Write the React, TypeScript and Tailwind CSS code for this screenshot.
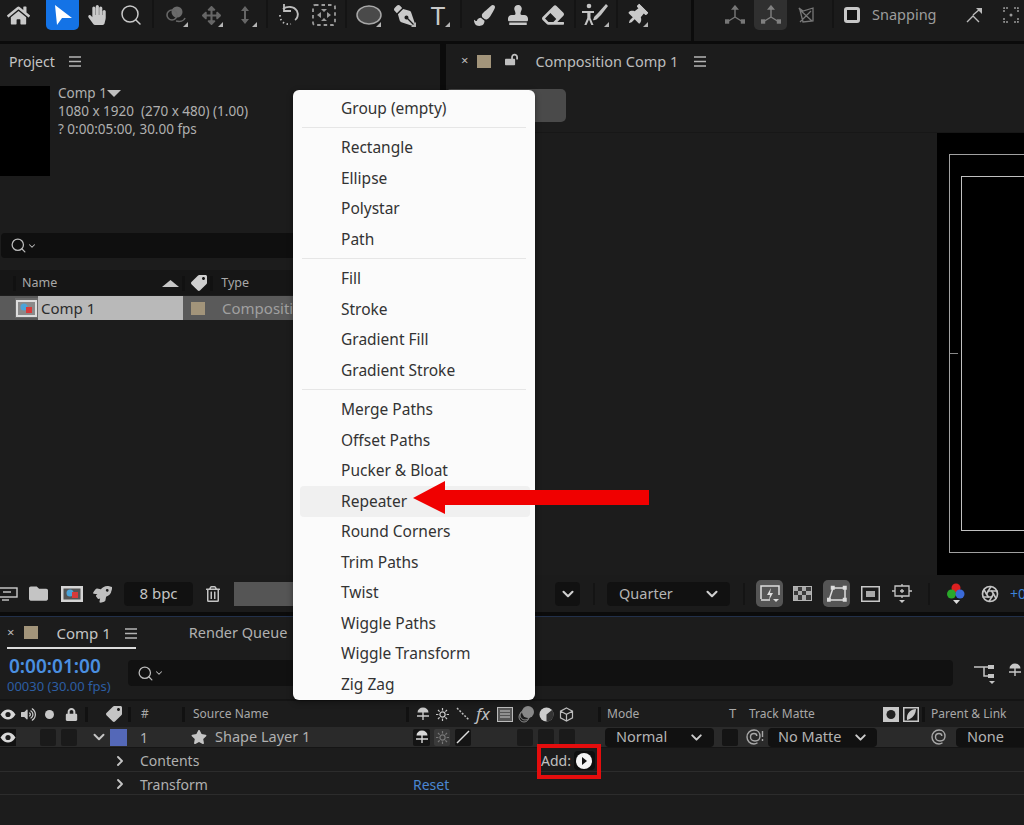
import React from "react";
import { FaHandPaper, FaArrowsAlt, FaPenNib, FaPaintBrush, FaStamp, FaEraser, FaThumbtack, FaStar, FaTag, FaLock, FaLockOpen, FaVolumeUp, FaFolder, FaRegTrashAlt, FaRocket, FaHome } from "react-icons/fa";
import { ChevronDown, ChevronRight, Search, Aperture } from "lucide-react";

const Fly = () => (
  <svg width="5" height="5" viewBox="0 0 5 5" className="absolute right-[1px] bottom-[3px]"><path d="M5 0V5H0Z" fill="#b5b5b5" /></svg>
);

function Tool({ cls, fly, children }: { cls: string; fly?: boolean; children: React.ReactNode }) {
  return (
    <div className={"relative h-[30px] flex items-center justify-center shrink-0 " + cls}>
      {children}
      {fly && <Fly />}
    </div>
  );
}

const Sep = ({ cls }: { cls: string }) => <div className={"w-[2px] h-[28px] bg-[#141414] shrink-0 " + cls} />;

const Burger = ({ cls = "" }: { cls?: string }) => (
  <svg width="12" height="11" viewBox="0 0 12 11" className={cls}><path d="M0 1h12M0 5.500h12M0 10h12" stroke="#b4b4b4" strokeWidth="1.300" /></svg>
);

const Swatch = ({ cls = "" }: { cls?: string }) => <div className={"w-[14px] h-[13px] bg-[#a2947a] shrink-0 " + cls} />;

const Axis = ({ color = "#777" }: { color?: string }) => (
  <svg width="20" height="20" viewBox="0 0 20 20" fill="none" stroke={color} strokeWidth="1.400"><path d="M10 2v10M10 12l-8 5M10 12l8 5" /><path d="M10 1l-2.500 3h5z" fill={color} /><rect x="0.500" y="15" width="3" height="3" fill={color} /><rect x="16.500" y="15" width="3" height="3" fill={color} /></svg>
);

const Eye = () => (
  <svg width="16" height="11" viewBox="0 0 16 11"><path d="M0.500 5.500C3 1.500 5.500 0.500 8 0.500s5 1 7.500 5c-2.500 4-5 5-7.500 5s-5-1-7.500-5z" fill="#d8d8d8" /><circle cx="8" cy="5.500" r="2.600" fill="#1c1c1c" /></svg>
);

const Anchor = ({ c = "#c8c8c8" }: { c?: string }) => (
  <svg width="16" height="14" viewBox="0 0 16 14"><path d="M2.500 5.500a5.500 5 0 0 1 11 0z" fill={c} /><path d="M8 5v8M2 9h12" stroke={c} strokeWidth="1.400" fill="none" /></svg>
);

const Sun = ({ c = "#c8c8c8" }: { c?: string }) => (
  <svg width="13" height="13" viewBox="0 0 13 13" stroke={c} strokeWidth="1.200" fill="none"><circle cx="6.500" cy="6.500" r="2.600" /><path d="M6.500 0v2.400M6.500 10.600V13M0 6.500h2.400M10.600 6.500H13M2 2l1.600 1.600M9.400 9.400L11 11M11 2L9.400 3.600M3.600 9.400L2 11" /></svg>
);

const Spiral = ({ c = "#a8a8a8", dots }: { c?: string; dots?: boolean }) => (
  <svg width="18" height="16" viewBox="0 0 18 16" fill="none" stroke={c} strokeWidth="1.400">
    <path d="M11.500 13.800C10.500 14.500 9.300 15 8 15 4 15 1 12 1 8s3-7 7-7 6 3 6 6-2 5-5 5-4.500-2-4.500-4 1.500-3.500 3.500-3.500 2.800 1.300 2.800 2.500" />
    {dots && <path d="M16.500 2v6M16.500 10v2" />}
  </svg>
);

const menu: (string | null)[] = [
  "Group (empty)", null, "Rectangle", "Ellipse", "Polystar", "Path", null, "Fill", "Stroke", "Gradient Fill", "Gradient Stroke", null,
  "Merge Paths", "Offset Paths", "Pucker & Bloat", "Repeater", "Round Corners", "Trim Paths", "Twist", "Wiggle Paths", "Wiggle Transform", "Zig Zag",
];

const Box = ({ cls = "" }: { cls?: string }) => <div className={"w-[16px] h-[17px] rounded-[2px] bg-[#1a1a1a] shrink-0 " + cls} />;
const HSep = ({ cls = "" }: { cls?: string }) => <div className={"w-[3px] h-[15px] bg-[#111] shrink-0 " + cls} />;

export default function App() {
  return (
    <div className="relative w-[1024px] h-[825px] overflow-hidden bg-[#0b0b0b] flex flex-col text-[#b9b9b9] font-['Open_Sans','Noto_Sans',sans-serif] text-[14px]">
      {/* toolbar */}
      <div className="h-[41px] shrink-0 bg-[#1b1b1b] flex items-start pt-0">
        <Tool cls="ml-[6px] w-[24px]"><FaHome size={23} color="#c9c9c9" /></Tool>
        <div className="ml-[16px] w-[33px] h-[30px] bg-[#1473e6] rounded-b-[5px] shrink-0 flex items-center justify-center">
          <svg width="20" height="24" viewBox="0 0 20 24"><path d="M2 2L19 15H9L4 22Z" fill="#fff" /></svg>
        </div>
        <Tool cls="ml-[6px] w-[24px]"><FaHandPaper size={20} color="#c9c9c9" /></Tool>
        <Tool cls="ml-[9px] w-[26px]"><Search size={24} color="#c9c9c9" strokeWidth={1.500} /></Tool>
        <Sep cls="ml-[8px]" />
        <Tool cls="ml-[9px] w-[26px]" fly>
          <svg width="24" height="22" viewBox="0 0 24 22" fill="none"><circle cx="13" cy="8" r="5.500" fill="#6a6a6a" /><circle cx="8" cy="11" r="5" stroke="#666" strokeWidth="1.600" /><path d="M12 17c4 1 8 0 9-3" stroke="#666" strokeWidth="1.600" /></svg>
        </Tool>
        <Tool cls="ml-[9px] w-[26px]" fly><FaArrowsAlt size={19} color="#666" /></Tool>
        <Tool cls="ml-[8px] w-[26px]" fly>
          <svg width="14" height="20" viewBox="0 0 14 20" fill="#666"><path d="M7 1L3 6H6V14H3L7 19L11 14H8V6H11Z" /></svg>
        </Tool>
        <Sep cls="ml-[8px]" />
        <Tool cls="ml-[8px] w-[26px]">
          <svg width="24" height="24" viewBox="0 0 24 24" fill="none" stroke="#bdbdbd" strokeWidth="1.800"><path d="M6 6C10 3 17 3 20 8c2 4 0 8-2 9" /><path d="M7 1v7h7" strokeWidth="1.800" /><path d="M3 12c0 6 4 10 11 9" strokeDasharray="1.500 2.500" /></svg>
        </Tool>
        <Tool cls="ml-[9px] w-[26px]">
          <svg width="24" height="22" viewBox="0 0 24 22" fill="none" stroke="#9a9a9a" strokeWidth="1.800"><rect x="1" y="1" width="22" height="20" rx="2" strokeDasharray="3.500 3" /><path d="M5 11l4-3v6zM19 11l-4-3v6z" fill="#9a9a9a" stroke="none" /><path d="M9 5h6l-3 3zM9 17h6l-3-3z" fill="#9a9a9a" stroke="none" /></svg>
        </Tool>
        <Sep cls="ml-[8px]" />
        <Tool cls="ml-[9px] w-[26px]" fly>
          <svg width="26" height="20" viewBox="0 0 26 20"><ellipse cx="13" cy="10" rx="12" ry="9" fill="#4a4a4a" stroke="#a8a8a8" strokeWidth="1.500" /></svg>
        </Tool>
        <Tool cls="ml-[9px] w-[26px]" fly><FaPenNib size={21} color="#c9c9c9" className="rotate-[-90deg]" /></Tool>
        <Tool cls="ml-[8px] w-[26px]" fly><span className="font-['Liberation_Serif',serif] text-[#c9c9c9] text-[26px] leading-[30px]">T</span></Tool>
        <Sep cls="ml-[9px]" />
        <Tool cls="ml-[9px] w-[26px]"><FaPaintBrush size={21} color="#c9c9c9" /></Tool>
        <Tool cls="ml-[8px] w-[26px]"><FaStamp size={20} color="#c9c9c9" /></Tool>
        <Tool cls="ml-[9px] w-[26px]"><FaEraser size={22} color="#c9c9c9" /></Tool>
        <Sep cls="ml-[8px]" />
        <Tool cls="ml-[4px] w-[30px]" fly>
          <svg width="28" height="24" viewBox="0 0 28 24" fill="#c4c4c4"><circle cx="8" cy="3" r="2.300" /><path d="M1 8h12v2H9.500v5l3 7h-2.200L8 16.500 5.500 22H3.300l3-7v-5H1zM25 1l2 2-7 9-4 4c-1 1-3 1.500-4 1 1-1 .5-3 2-4l3-3z" /></svg>
        </Tool>
        <Sep cls="ml-[6px]" />
        <Tool cls="ml-[5px] w-[26px]" fly><FaThumbtack size={21} color="#c9c9c9" className="rotate-[45deg]" /></Tool>
        <div className="ml-[42px] w-[3px] h-[41px] bg-[#0c0c0c] shrink-0" />
        <Tool cls="ml-[30px] w-[22px]"><Axis /></Tool>
        <div className="ml-[8px] w-[33px] h-[30px] bg-[#303030] rounded-b-[5px] shrink-0 flex items-center justify-center"><Axis color="#808080" /></div>
        <Tool cls="ml-[8px] w-[22px]">
          <svg width="18" height="18" viewBox="0 0 18 18" fill="none" stroke="#777" strokeWidth="1.300"><path d="M2 2l4 3 10-3v13l-10 1-3-12zM3 16L14 5M3 4l12 11" /></svg>
        </Tool>
        <Sep cls="ml-[15px]" />
        <div className="ml-[10px] h-[30px] flex items-center shrink-0">
          <div className="w-[16px] h-[16px] border-[3px] border-[#c8c8c8] rounded-[3px] bg-[#141414]" />
          <span className="ml-[12px] text-[#9d9d9d] text-[14.500px]">Snapping</span>
        </div>
        <Tool cls="ml-[27px] w-[20px]">
          <svg width="18" height="16" viewBox="0 0 18 16" fill="none" stroke="#bbb" strokeWidth="1.400"><path d="M2 15l6-6 6 6M8 8l7-6" /><path d="M11 1h6v6z" fill="#bbb" stroke="none" /></svg>
        </Tool>
        <Tool cls="ml-[17px] w-[20px]">
          <svg width="16" height="16" viewBox="0 0 16 16" fill="none" stroke="#999" strokeWidth="1.500"><path d="M1 5V1h4M11 1h4v4M15 11v4h-4M5 15H1v-4" strokeDasharray="2 1" /><circle cx="8" cy="8" r="1.500" fill="#999" stroke="none" /></svg>
        </Tool>
      </div>

      {/* panels */}
      <div className="mt-[3px] h-[568px] shrink-0 flex gap-[6px]">
        {/* project */}
        <div className="w-[440px] shrink-0 bg-[#1c1c1c] flex flex-col">
          <div className="h-[34px] shrink-0 flex items-center pl-[9px] text-[#c4c4c4] text-[14px]">
            Project<Burger cls="ml-[14px]" />
          </div>
          <div className="mt-[8px] h-[90px] flex shrink-0">
            <div className="w-[50px] h-[90px] bg-black shrink-0" />
            <div className="ml-[8px] text-[13.500px] leading-[18px] -mt-[2px] text-[#b0b0b0]">
              <div className="flex items-center">Comp 1<svg width="14" height="7" viewBox="0 0 14 7"><path d="M0 0h14L7 7z" fill="#c0c0c0" /></svg></div>
              <div>1080 x 1920&nbsp; (270 x 480) (1.00)</div>
              <div>? 0:00:05:00, 30.00 fps</div>
            </div>
          </div>
          <div className="mt-[57px] ml-[1px] h-[25px] bg-[#0f0f0f] rounded-[4px] flex items-center pl-[9px] shrink-0">
            <Search size={17} color="#bbb" strokeWidth={1.800} />
            <ChevronDown size={10} color="#bbb" strokeWidth={2.500} />
          </div>
          <div className="mt-[12px] h-[25px] pt-[1px] bg-[#161616] flex items-center shrink-0 text-[12.500px] text-[#a8a8a8]">
            <HSep cls="ml-[13px]" />
            <span className="ml-[6px]">Name</span>
            <svg width="17" height="7" viewBox="0 0 17 7" className="ml-[105px]"><path d="M0 7h17L8.500 0z" fill="#c8c8c8" /></svg>
            <HSep cls="ml-[3px]" />
            <FaTag size={16} color="#cfcfcf" className="ml-[6px] rotate-90" />
            <HSep cls="ml-[3px]" />
            <span className="ml-[8px]">Type</span>
          </div>
          <div className="mt-[1px] h-[24px] bg-[#5a5a5a] flex items-center shrink-0">
            <div className="ml-[15px] w-[23px] h-[20px] bg-[#6a6a6a] flex items-center justify-center shrink-0">
              <svg width="21" height="17" viewBox="0 0 21 17"><rect width="21" height="17" fill="#ddd" /><rect x="2" y="2" width="17" height="13" fill="#8a8a8a" /><circle cx="8" cy="7" r="3.500" fill="#4aa3d8" /><rect x="10" y="7" width="6" height="6" fill="#d83a3a" /></svg>
            </div>
            <div className="w-[145px] h-[24px] bg-[#b9b9b9] text-[#2c2c2c] text-[15px] flex items-center pl-[3px] shrink-0">Comp 1</div>
            <Swatch cls="ml-[8px]" />
            <span className="ml-[17px] text-[#a0a0a0] text-[15px]">Composition</span>
          </div>
          <div className="flex-1" />
          <div className="h-[37px] bg-[#1b1b1b] flex items-center shrink-0">
            <svg width="18" height="14" viewBox="0 0 18 14" fill="none" stroke="#ccc" strokeWidth="1.400"><rect x="-2" y="1" width="19" height="9" /><path d="M3 5h8" /><path d="M2 13h7" /></svg>
            <FaFolder size={19} color="#c4c4c4" className="ml-[11px]" />
            <svg width="22" height="16" viewBox="0 0 22 16" className="ml-[13px]"><rect width="22" height="16" fill="#d5d5d5" /><rect x="2.500" y="2.500" width="17" height="11" fill="#555" /><circle cx="9" cy="7" r="3.500" fill="#4aa3d8" /><rect x="11" y="6" width="6" height="6" fill="#d83a3a" /></svg>
            <FaRocket size={18} color="#bfbfbf" className="ml-[10px] rotate-[10deg]" />
            <div className="ml-[13px] w-[69px] h-[24px] bg-[#111] rounded-[4px] flex items-center justify-center text-[#c4c4c4] text-[15px] shrink-0">8 bpc</div>
            <FaRegTrashAlt size={16} color="#c4c4c4" className="ml-[12px]" />
            <div className="ml-[13px] w-[70px] h-[24px] bg-[#555] shrink-0" />
          </div>
        </div>

        {/* composition */}
        <div className="flex-1 bg-[#1c1c1c] flex flex-col min-w-0">
          <div className="h-[34px] shrink-0 flex items-center text-[#bdbdbd]">
            <span className="ml-[15px] text-[13px]">×</span>
            <Swatch cls="ml-[9px]" />
            <FaLockOpen size={13} color="#c0c0c0" className="ml-[14px] -mt-[4px]" />
            <span className="ml-[17px] mt-[1px] text-[14.500px]">Composition Comp 1</span>
            <Burger cls="ml-[16px]" />
          </div>
          <div className="h-[55px] shrink-0 border-b border-[#171717] pt-[11px]">
            <div className="w-[120px] h-[33px] bg-[#4a4a4a] rounded-[5px]" />
          </div>
          <div className="flex-1 flex justify-end">
            <div className="w-[87px] bg-black pt-[21px] pl-[12px]">
              <div className="h-[399px] border-l border-y border-[#a0a0a0] pl-[11px] py-[21px] relative">
                <div className="h-full border-l border-y border-[#c0c0c0]" />
                <div className="absolute left-0 top-[198px] w-[8px] h-px bg-[#888]" />
              </div>
            </div>
          </div>
          <div className="h-[37px] shrink-0 bg-[#1b1b1b] flex items-center">
            <div className="ml-[109px] w-[25px] h-[24px] bg-[#111] rounded-[4px] flex items-center justify-center shrink-0"><ChevronDown size={18} color="#d0d0d0" strokeWidth={2.800} /></div>
            <div className="ml-[13px] w-[2px] h-[22px] bg-[#141414] shrink-0" />
            <div className="ml-[12px] w-[123px] h-[24px] bg-[#111] rounded-[4px] flex items-center justify-between pl-[12px] pr-[9px] text-[14.500px] text-[#b4b4b4] shrink-0">
              Quarter<ChevronDown size={18} color="#d0d0d0" strokeWidth={2.800} />
            </div>
            <div className="ml-[13px] w-[2px] h-[22px] bg-[#141414] shrink-0" />
            <div className="ml-[11px] w-[27px] h-[27px] bg-[#555] rounded-[5px] flex items-center justify-center shrink-0">
              <svg width="20" height="18" viewBox="0 0 20 18" fill="none" stroke="#ddd" strokeWidth="1.500"><path d="M1 14V1h18v9M1 15h9" /><path d="M11 3l-4 7h3l-1 5 4-7h-3z" fill="#ddd" stroke="none" /><path d="M13 14h6l-3 3z" fill="#ddd" stroke="none" /></svg>
            </div>
            <svg width="19" height="15" viewBox="0 0 19 15" className="ml-[10px] shrink-0"><rect width="19" height="15" fill="#b5b5b5" /><rect x="1" y="1" width="17" height="13" fill="#3a3a3a" /><path d="M1 1h4v4H1zM9 1h4v4H9zM5 5h4v4H5zM13 5h5v4h-5zM1 9h4v5H1zM9 9h4v5H9z" fill="#aaa" /></svg>
            <div className="ml-[11px] w-[27px] h-[27px] bg-[#555] rounded-[5px] flex items-center justify-center shrink-0">
              <svg width="20" height="18" viewBox="0 0 20 18" fill="none" stroke="#ddd" strokeWidth="1.500"><path d="M6 3h12M18 3v12M18 15H2M2 15l4-12" /><rect x="4.500" y="1.500" width="2.500" height="2.500" fill="#ddd" /><rect x="16.500" y="1.500" width="2.500" height="2.500" fill="#ddd" /><rect x="16.500" y="13.500" width="2.500" height="2.500" fill="#ddd" /><rect x="0.500" y="13.500" width="2.500" height="2.500" fill="#ddd" /></svg>
            </div>
            <svg width="19" height="16" viewBox="0 0 19 16" className="ml-[11px] shrink-0"><rect x="0.750" y="0.750" width="17.500" height="14.500" fill="none" stroke="#c8c8c8" strokeWidth="1.500" /><rect x="5" y="5" width="9" height="6" fill="#aaa" /></svg>
            <svg width="20" height="20" viewBox="0 0 20 20" className="ml-[12px] shrink-0" fill="none" stroke="#c8c8c8" strokeWidth="1.300"><path d="M3 2h14v10H3zM0 7h3M17 7h3M10 0v2M10 12v2M8 7h4M10 5v4" /><path d="M7 16h6l-3 3z" fill="#c8c8c8" stroke="none" /></svg>
            <div className="ml-[16px] w-[2px] h-[22px] bg-[#141414] shrink-0" />
            <svg width="18" height="22" viewBox="0 0 18 22" className="ml-[17px] shrink-0"><circle cx="9" cy="5" r="4.500" fill="#dc2020" /><circle cx="4.500" cy="11" r="4.500" fill="#2aa82a" /><circle cx="13" cy="11" r="4.500" fill="#3a6ad8" /><path d="M6 17h7l-3.500 4z" fill="#ddd" /></svg>
            <Aperture size={18} color="#c4c4c4" strokeWidth={2.200} className="ml-[16px] shrink-0" />
            <span className="ml-[11px] text-[#3d82d8] text-[14px] shrink-0">+0</span>
          </div>
        </div>
      </div>

      {/* timeline */}
      <div className="mt-[4px] h-px bg-[#22304a] shrink-0" />
      <div className="flex-1 bg-[#1c1c1c] flex flex-col min-h-0">
        <div className="h-[32px] shrink-0 flex items-center relative text-[14.500px]">
          <span className="ml-[7px] text-[13px] text-[#bbb]">×</span>
          <Swatch cls="ml-[10px] -mt-[2px]" />
          <span className="ml-[18px] text-[15px] text-[#c4c4c4]">Comp 1</span>
          <Burger cls="ml-[14px]" />
          <span className="ml-[52px] text-[#b0b0b0]">Render Queue</span>
          <div className="absolute left-[7px] top-[30px] w-[129px] h-[2px] bg-[#dcdcdc]" />
        </div>
        <div className="h-[50px] shrink-0 flex relative">
          <div className="ml-[7px] w-[112px] shrink-0 leading-none pt-[8px]">
            <div className="text-[#4a8fe0] text-[19px] font-semibold pl-[2px]">0:00:01:00</div>
            <div className="text-[#2c5ea3] text-[13px] mt-[4px] whitespace-nowrap">00030 (30.00 fps)</div>
          </div>
          <div className="ml-[9px] mt-[11px] w-[825px] h-[26px] bg-[#111] rounded-[4px] flex items-center pl-[9px] shrink-0">
            <Search size={17} color="#bbb" strokeWidth={1.800} />
            <ChevronDown size={10} color="#bbb" strokeWidth={2.500} />
          </div>
          <svg width="22" height="22" viewBox="0 0 22 22" className="ml-[21px] mt-[14px] shrink-0" fill="none" stroke="#c4c4c4" strokeWidth="1.500"><path d="M0 4h8M8 4h6M10 4v9h4" /><path d="M14 2h6v4h-6zM14 11h6v4h-6z" fill="#c4c4c4" stroke="none" /><path d="M15 18h6l-3 3z" fill="#c4c4c4" stroke="none" /></svg>
          <div className="ml-[11px] mt-[14px] h-[20px] shrink-0"><Anchor /></div>
        </div>

        {/* headers */}
        <div className="h-[28px] shrink-0 border-t-2 border-[#141414] flex items-center text-[12px] text-[#a8a8a8]">
          <div className="w-[16px] shrink-0"><Eye /></div>
          <FaVolumeUp size={15} color="#c8c8c8" className="ml-[5px] shrink-0" />
          <div className="ml-[9px] w-[9px] h-[9px] rounded-full bg-[#c8c8c8] shrink-0" />
          <FaLock size={13} color="#c8c8c8" className="ml-[11px] shrink-0" />
          <HSep cls="ml-[7px]" />
          <FaTag size={16} color="#c4c4c4" className="ml-[18px] rotate-90 shrink-0" />
          <HSep cls="ml-[6px]" />
          <span className="ml-[10px] w-[41px]">#</span>
          <HSep />
          <span className="ml-[8px] w-[213px] whitespace-nowrap">Source Name</span>
          <HSep />
          <div className="ml-[6px] w-[21px] shrink-0"><Anchor /></div>
          <div className="w-[20px] shrink-0"><Sun /></div>
          <svg width="14" height="14" viewBox="0 0 14 14" className="shrink-0"><path d="M1 1l12 12" stroke="#c0c0c0" strokeWidth="1.500" strokeDasharray="2 1.500" /></svg>
          <span className="ml-[6px] w-[21px] italic text-[17px] font-['Liberation_Serif',serif] text-[#c0c0c0]">fx</span>
          <svg width="16" height="15" viewBox="0 0 16 15" className="shrink-0"><rect x="0.500" y="0.500" width="15" height="14" fill="#555" stroke="#bbb" /><path d="M3 4h10M3 7h10M3 10h10" stroke="#ccc" /></svg>
          <svg width="18" height="18" viewBox="0 0 18 18" className="ml-[4px] shrink-0"><circle cx="7" cy="12" r="5" fill="none" stroke="#888" /><circle cx="8" cy="10" r="5" fill="none" stroke="#888" /><circle cx="11" cy="7" r="6" fill="#888" /></svg>
          <svg width="15" height="15" viewBox="0 0 15 15" className="ml-[4px] shrink-0"><circle cx="7.500" cy="7.500" r="7" fill="#ccc" /><path d="M7.500 7.500L13 3a7 7 0 0 1-5.500 11.500z" fill="#333" /></svg>
          <svg width="15" height="15" viewBox="0 0 15 15" className="ml-[5px] shrink-0" fill="none" stroke="#bbb" strokeWidth="1.200"><path d="M7.500 1l6 3.200v6.600l-6 3.200-6-3.200V4.200zM1.500 4.200l6 3.200 6-3.200M7.500 7.400V14" /></svg>
          <HSep cls="ml-[24px]" />
          <span className="ml-[6px] w-[122px]">Mode</span>
          <span className="w-[20px] text-[13px]">T</span>
          <span className="w-[134px] whitespace-nowrap">Track Matte</span>
          <svg width="16" height="15" viewBox="0 0 16 15" className="shrink-0"><rect width="16" height="15" fill="#c8c8c8" /><circle cx="8" cy="7.500" r="4.500" fill="#222" /></svg>
          <svg width="16" height="15" viewBox="0 0 16 15" className="ml-[4px] shrink-0"><rect x="0.750" y="0.750" width="14.500" height="13.500" fill="none" stroke="#c8c8c8" strokeWidth="1.500" /><path d="M13 2C8 2 3 6 4 13c5-1 9-6 9-11z" fill="#c8c8c8" /></svg>
          <HSep cls="ml-[3px]" />
          <span className="ml-[6px] whitespace-nowrap">Parent &amp; Link</span>
        </div>

        {/* layer row */}
        <div className="h-[21px] shrink-0 bg-[#2a2a2a] border-b border-[#151515] flex items-center">
          <div className="w-[16px] h-[17px] bg-[#111] flex items-center justify-center shrink-0"><Eye /></div>
          <Box cls="ml-[24px]" />
          <Box cls="ml-[5px]" />
          <ChevronDown size={18} color="#c4c4c4" strokeWidth={2.600} className="ml-[13px] shrink-0" />
          <div className="ml-[2px] w-[17px] h-[17px] bg-[#5468b8] shrink-0" />
          <span className="ml-[13px] w-[51px] shrink-0 text-[14px] text-[#b4b4b4]">1</span>
          <FaStar size={16} color="#c4c4c4" className="shrink-0" />
          <span className="ml-[8px] w-[198px] shrink-0 text-[14.500px] text-[#b0b0b0] whitespace-nowrap">Shape Layer 1</span>
          <div className="w-[17px] h-[17px] bg-[#141414] rounded-[2px] flex items-center justify-center shrink-0"><Anchor c="#d8d8d8" /></div>
          <div className="ml-[4px] w-[16px] h-[17px] bg-[#3a3a3a] rounded-[2px] flex items-center justify-center shrink-0"><Sun c="#777" /></div>
          <div className="ml-[5px] w-[16px] h-[17px] bg-[#141414] rounded-[2px] flex items-center justify-center shrink-0"><svg width="14" height="14" viewBox="0 0 14 14"><path d="M1 13L13 1" stroke="#ddd" strokeWidth="1.500" /></svg></div>
          <Box cls="ml-[46px]" />
          <Box cls="ml-[5px]" />
          <Box cls="ml-[5px]" />
          <div className="ml-[30px] w-[109px] h-[19px] bg-[#111] rounded-[4px] flex items-center justify-between pl-[11px] pr-[9px] text-[14.500px] text-[#b4b4b4] shrink-0">Normal<ChevronDown size={17} color="#ccc" strokeWidth={2.800} /></div>
          <Box cls="ml-[8px] bg-[#141414]" />
          <div className="ml-[8px] w-[22px] shrink-0"><Spiral dots /></div>
          <div className="w-[109px] h-[19px] bg-[#111] rounded-[4px] flex items-center justify-between pl-[10px] pr-[8px] text-[14.500px] text-[#b4b4b4] shrink-0">No Matte<ChevronDown size={17} color="#ccc" strokeWidth={2.800} /></div>
          <div className="ml-[54px] w-[25px] shrink-0"><Spiral /></div>
          <div className="w-[80px] h-[19px] bg-[#111] rounded-l-[4px] pl-[11px] text-[14.500px] text-[#b4b4b4] flex items-center shrink-0">None</div>
        </div>

        {/* Contents */}
        <div className="h-[24px] pt-[2px] shrink-0 border-b border-[#2c2c2c] flex items-center text-[14px] text-[#b0b0b0]">
          <ChevronRight size={16} color="#c4c4c4" strokeWidth={2.800} className="ml-[112px] shrink-0" />
          <span className="ml-[12px] w-[401px]">Contents</span>
          <span className="text-[#c0c0c0]">Add:</span>
          <div className="ml-[3px] w-[21px] h-[19px] rounded-[4px] bg-[#0e0e0e] flex items-center justify-center shrink-0">
            <svg width="16" height="16" viewBox="0 0 16 16"><circle cx="8" cy="8" r="8" fill="#f4f4f4" /><path d="M6 4l5 4-5 4z" fill="#111" /></svg>
          </div>
        </div>
        {/* Transform */}
        <div className="h-[23px] pt-[2px] shrink-0 border-b border-[#2c2c2c] flex items-center text-[14px] text-[#b0b0b0]">
          <ChevronRight size={16} color="#c4c4c4" strokeWidth={2.800} className="ml-[112px] shrink-0" />
          <span className="ml-[12px] w-[273px]">Transform</span>
          <span className="text-[#4a86d0]">Reset</span>
        </div>
      </div>

      {/* menu overlay */}
      <div className="absolute left-[293px] top-[90px] w-[242px] h-[610px] bg-[#fbfbfb] rounded-[6px] py-[3px] font-['Noto_Sans','Open_Sans',sans-serif] text-[15.500px] text-[#333] shadow-[0_2px_6px_rgba(0,0,0,0.4)]">
        {menu.map((m, i) =>
          m === null ? (
            <div key={i} className="h-[9px] pt-[3px] px-[9px]"><div className="h-px w-full bg-[#e6e6e6]" /></div>
          ) : (
            <div key={i} className={"h-[30.500px] flex items-center pl-[41px] ml-[7px] mr-[5px] rounded-[4px] " + (m === "Repeater" ? "bg-[#f0f0f0]" : "")}>
              {m}
            </div>
          )
        )}
      </div>

      {/* annotations */}
      <svg width="238" height="34" viewBox="0 0 238 34" className="absolute left-[412px] top-[481px]"><path d="M1 17L33 0V9H237V24H33V33Z" fill="#f00000" /></svg>
      <div className="absolute left-[537px] top-[744px] w-[64px] h-[35px] border-[4px] border-[#e40d0d]" />
    </div>
  );
}
